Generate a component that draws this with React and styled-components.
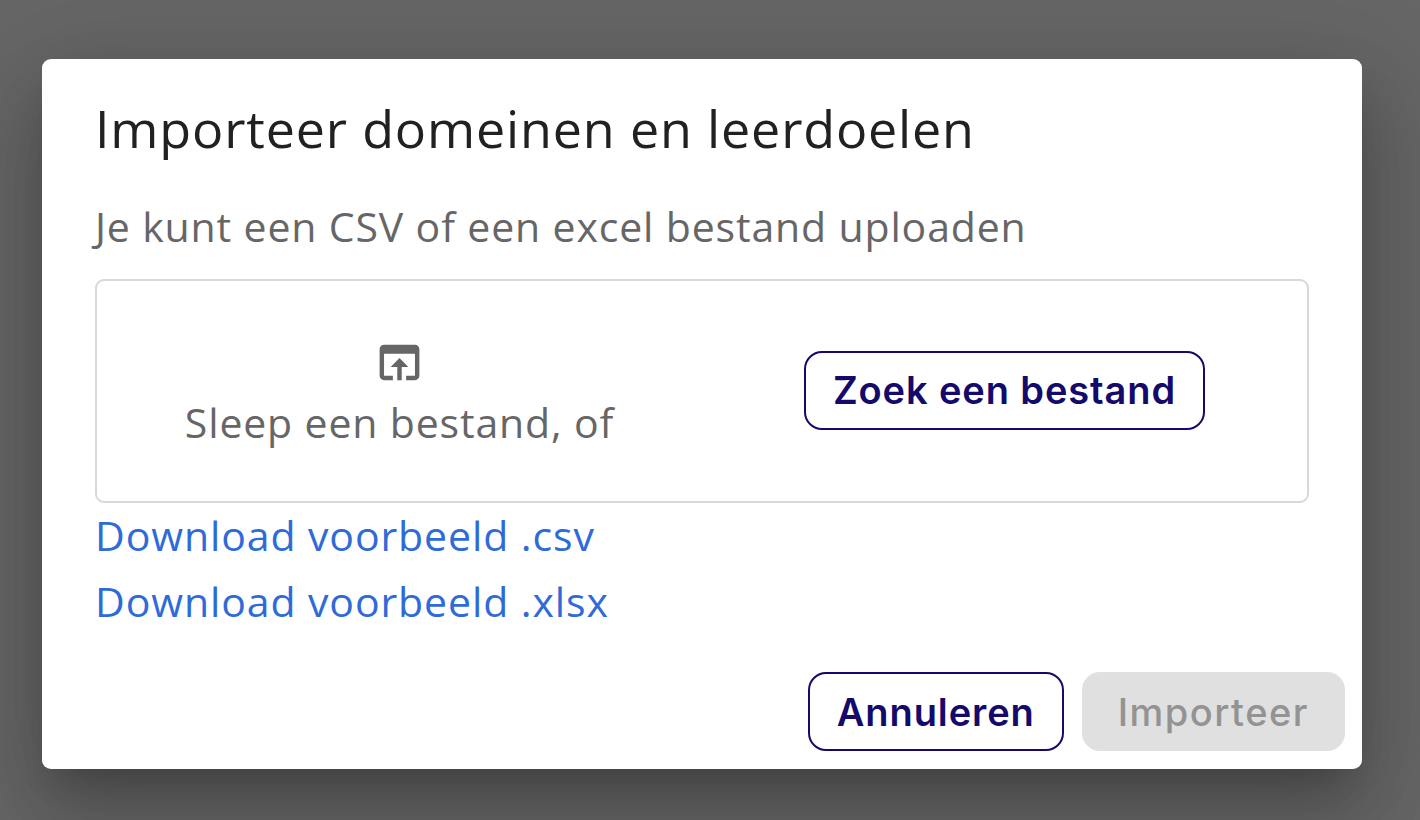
import styled, { createGlobalStyle } from "styled-components";

const GlobalStyle = createGlobalStyle`
  html, body {
    margin: 0;
    padding: 0;
    background: #666666;
    -webkit-font-smoothing: antialiased;
  }
`

const Overlay = styled.div`
  width: 1420px;
  height: 820px;
  box-sizing: border-box;
  padding: 59px 58px 51px 42px;
  background: #666666;
  overflow: hidden;
`

const Dialog = styled.div`
  width: 1320px;
  height: 710px;
  box-sizing: border-box;
  background: #fff;
  border-radius: 9px;
  box-shadow: 0 24px 33px -15px rgba(0, 0, 0, 0.2), 0 53px 84px 7px rgba(0, 0, 0, 0.14), 0 20px 101px 18px rgba(0, 0, 0, 0.12);
  display: flex;
  flex-direction: column;
  font-family: "Open Sans", Lato, sans-serif;
`

const Title = styled.h2`
  margin: 0;
  padding: 34px 53px 0;
  font-size: 52px;
  font-weight: 500;
  line-height: 70px;
  letter-spacing: 0.85px;
  color: #212121;
`

const Content = styled.div`
  padding: 38px 53px 0;
`

const Description = styled.p`
  margin: 0 0 25px;
  font-size: 41px;
  line-height: 51px;
  padding-bottom: 2px;
  letter-spacing: 0.85px;
  color: #666666;
`

const DropZone = styled.div`
  height: 224px;
  box-sizing: border-box;
  border: 2px solid #d8d8d8;
  border-radius: 9px;
  display: grid;
  grid-template-columns: 1fr 1fr;
  align-items: center;
`

const DropHint = styled.div`
  display: flex;
  flex-direction: column;
  align-items: center;
  padding-top: 9px;
  font-size: 41px;
  line-height: 67px;
  letter-spacing: 0.85px;
  color: #666666;
`

const DropColumn = styled.div`
  display: flex;
  justify-content: center;
  padding-bottom: 2px;
`

const Icon = styled.svg`
  display: block;
  width: 53px;
  height: 53px;
  fill: #666666;
`

const OutlineButton = styled.button`
  height: 79px;
  box-sizing: border-box;
  padding: 0 27px;
  background: #fff;
  border: 2px solid #140a6b;
  border-radius: 18px;
  font-family: Inter, Roboto, sans-serif;
  font-size: 38px;
  font-weight: 600;
  letter-spacing: 0.9px;
  color: #140a6b;
`

const Downloads = styled.div`
  margin-top: -1px;
`

const DownloadLink = styled.a`
  display: block;
  font-size: 41px;
  line-height: 66px;
  letter-spacing: 0.9px;
  color: #2f6bd8;
  text-decoration: none;
`

const Actions = styled.div`
  margin-top: auto;
  padding: 0 17px 18px 0;
  display: flex;
  justify-content: flex-end;
  gap: 18px;
`

const DisabledButton = styled.button`
  height: 79px;
  box-sizing: border-box;
  padding: 0 36px;
  background: #e0e0e0;
  border: none;
  border-radius: 18px;
  font-family: Inter, Roboto, sans-serif;
  font-size: 38px;
  font-weight: 500;
  letter-spacing: 1.5px;
  color: #939393;
`

export default function App() {
  return (
    <Overlay>
      <GlobalStyle />
      <Dialog>
        <Title>Importeer domeinen en leerdoelen</Title>
        <Content>
          <Description>Je kunt een CSV of een excel bestand uploaden</Description>
          <DropZone>
            <DropHint>
              <Icon viewBox="0 0 24 24">
                <path d="M19 4H5c-1.11 0-2 .9-2 2v12c0 1.1.89 2 2 2h4v-2H5V8h14v10h-4v2h4c1.1 0 2-.9 2-2V6c0-1.1-.89-2-2-2zm-7 6l-4 4h3v6h2v-6h3l-4-4z" />
              </Icon>
              Sleep een bestand, of
            </DropHint>
            <DropColumn>
              <OutlineButton>Zoek een bestand</OutlineButton>
            </DropColumn>
          </DropZone>
          <Downloads>
            <DownloadLink href="#">Download voorbeeld .csv</DownloadLink>
            <DownloadLink href="#">Download voorbeeld .xlsx</DownloadLink>
          </Downloads>
        </Content>
        <Actions>
          <OutlineButton>Annuleren</OutlineButton>
          <DisabledButton disabled>Importeer</DisabledButton>
        </Actions>
      </Dialog>
    </Overlay>
  )
}
